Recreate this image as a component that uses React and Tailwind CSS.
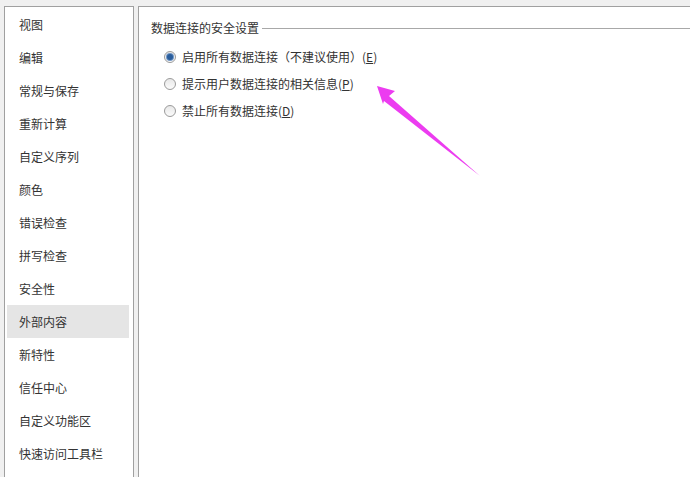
import React from 'react'

const menu = [
  '视图',
  '编辑',
  '常规与保存',
  '重新计算',
  '自定义序列',
  '颜色',
  '错误检查',
  '拼写检查',
  '安全性',
  '外部内容',
  '新特性',
  '信任中心',
  '自定义功能区',
  '快速访问工具栏',
]

const options = [
  { label: '启用所有数据连接（不建议使用）', key: 'E', checked: true },
  { label: '提示用户数据连接的相关信息', key: 'P', checked: false },
  { label: '禁止所有数据连接', key: 'D', checked: false },
]

function Radio({ checked }) {
  return (
    <span className="relative w-[12px] h-[12px] rounded-full border border-[#9a9a9a] bg-gradient-to-b from-[#e8e8e8] to-[#fbfbfb] flex items-center justify-center shrink-0">
      {checked && (
        <span className="w-[6px] h-[6px] rounded-full bg-[#2a5d9c] shadow-[0_0_0_1px_#6f95c4]" />
      )}
    </span>
  )
}

export default function App() {
  return (
    <div
      className="relative w-[690px] h-[477px] overflow-hidden bg-[#f0f0f0] flex pt-[6px] pl-[4px] gap-[4px] text-[12px] text-[#333]"
      style={{ fontFamily: '"Noto Sans CJK SC", "Noto Sans", sans-serif' }}
    >
      <div className="w-[130px] h-[480px] bg-white border border-[#a0a0a0] border-b-0 pt-[1px] pl-[2px] pr-[4px]">
        {menu.map((item) => (
          <div
            key={item}
            className={`h-[33px] flex items-center pl-[12px] ${item === '外部内容' ? 'bg-[#e5e5e5]' : ''}`}
          >
            {item}
          </div>
        ))}
      </div>

      <div className="flex-1 h-[480px] bg-white border-t border-l border-[#a0a0a0] pl-[12px] pt-[13px]">
        <div className="flex items-center gap-[3px] h-[16px]">
          <span>数据连接的安全设置</span>
          <span className="flex-1 h-px bg-[#a8a8a8]" />
        </div>
        <div className="flex flex-col gap-[11px] pt-[13px] pl-[13px]">
          {options.map((o) => (
            <div key={o.key} className="flex items-center gap-[6px] h-[16px]">
              <Radio checked={o.checked} />
              <span>
                {o.label}(<u>{o.key}</u>)
              </span>
            </div>
          ))}
        </div>
      </div>

      <svg className="absolute left-0 top-0 pointer-events-none" width="690" height="477">
        <polygon
          points="377,86 395,91 389,96 480,176 384,101 383,104"
          fill="#ec3cf0"
        />
      </svg>
    </div>
  )
}
